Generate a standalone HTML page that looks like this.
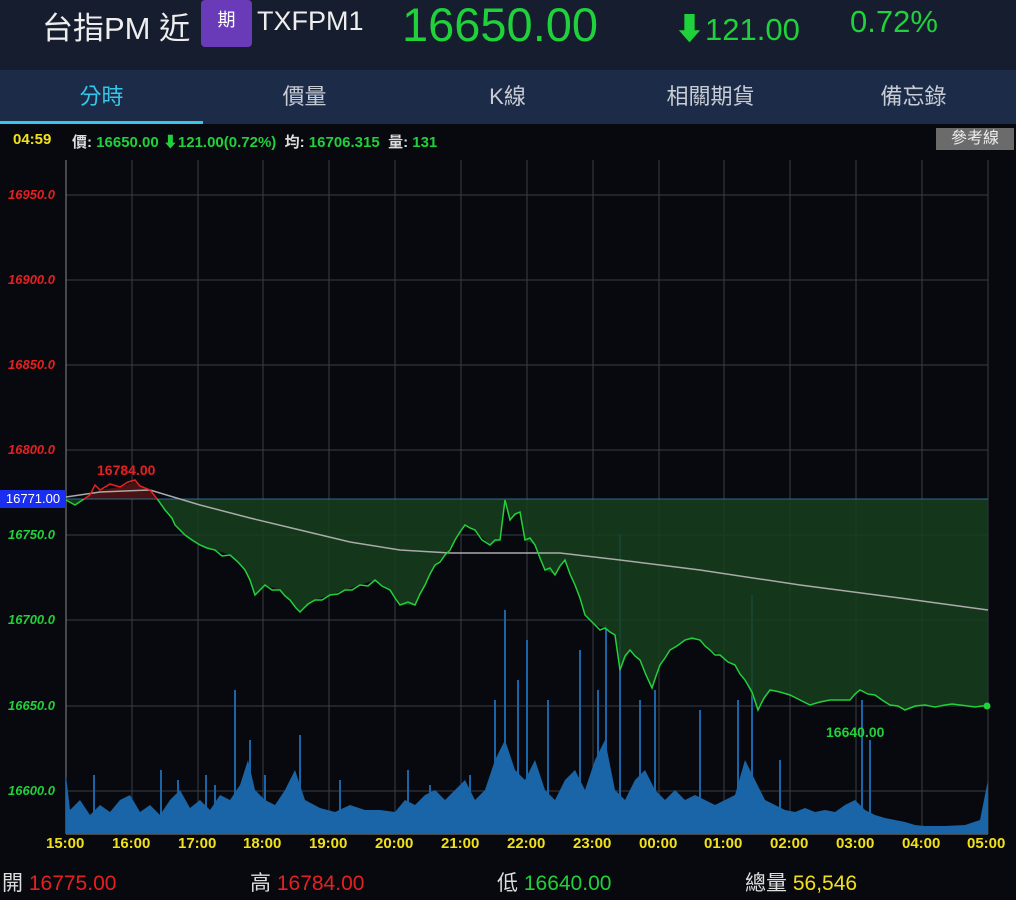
<!DOCTYPE html>
<html><head><meta charset="utf-8"><style>
*{margin:0;padding:0;box-sizing:border-box}
body{width:1016px;height:900px;background:#08090e;font-family:"Liberation Sans","Noto Sans CJK TC",sans-serif;position:relative;overflow:hidden;color:#fff}
.hdr{position:absolute;left:0;top:0;width:1016px;height:70px;background:#161d2e}
.t{position:absolute;white-space:nowrap}
.tabs{position:absolute;left:0;top:70px;width:1016px;height:54px;background:#1c2b47}
.tab{position:absolute;top:0;height:54px;line-height:54px;text-align:center;font-size:22px;color:#c8ccd4;width:203px}
.info{position:absolute;top:131px;font-size:15px;font-weight:bold}
.yl{position:absolute;left:8px;font-size:13px;font-weight:bold;font-style:italic}
.xl{position:absolute;top:835px;font-size:15px;font-weight:bold;color:#f2e11a}
.bt{position:absolute;top:867px;font-size:21px}
</style></head><body>
<div class="hdr">
<div class="t" style="left:42px;top:3px;font-size:31px;color:#eee">台指PM 近</div>
<div class="t" style="left:201px;top:0;width:51px;height:47px;background:#6a3bb8;border-radius:4px;font-size:18px;text-align:center;line-height:40px">期</div>
<div class="t" style="left:257px;top:6px;font-size:27px;color:#eee">TXFPM1</div>
<div class="t" style="left:402px;top:-3px;font-size:47px;color:#1fd13a">16650.00</div>
<div class="t" style="left:674px;top:4px;font-size:31px;color:#1fd13a">⬇121.00</div>
<div class="t" style="left:850px;top:4px;font-size:31px;color:#1fd13a">0.72%</div>
</div>
<div class="tabs">
<div class="tab" style="left:0;color:#35c6ea">分時</div>
<div class="tab" style="left:203px">價量</div>
<div class="tab" style="left:406px">K線</div>
<div class="tab" style="left:609px">相關期貨</div>
<div class="tab" style="left:812px">備忘錄</div>
<div style="position:absolute;left:0;top:51px;width:203px;height:3px;background:#35c6ea"></div>
</div>
<div class="info" style="left:13px;color:#f2e11a">04:59</div>
<div class="info" style="left:72px;color:#1fd13a"><span style="color:#ddd">價:</span> 16650.00 ⬇121.00(0.72%) &nbsp;<span style="color:#ddd">均:</span> 16706.315 &nbsp;<span style="color:#ddd">量:</span> 131</div>
<div class="t" style="left:936px;top:128px;width:78px;height:22px;background:#6b6b6b;color:#eee;font-size:16px;text-align:center;line-height:22px">參考線</div>
<svg style="position:absolute;left:0;top:0" width="1016" height="900">
<defs>
<clipPath id="below"><rect x="0" y="499" width="1016" height="400"/></clipPath>
<clipPath id="above"><rect x="0" y="0" width="1016" height="499"/></clipPath>
</defs>
<g stroke="#3a3d45" stroke-width="1">
<line x1="66" y1="195" x2="988" y2="195"/><line x1="66" y1="280" x2="988" y2="280"/><line x1="66" y1="365" x2="988" y2="365"/><line x1="66" y1="450" x2="988" y2="450"/><line x1="66" y1="535" x2="988" y2="535"/><line x1="66" y1="620" x2="988" y2="620"/><line x1="66" y1="706" x2="988" y2="706"/><line x1="66" y1="791" x2="988" y2="791"/>
<line x1="132" y1="160" x2="132" y2="834"/><line x1="198" y1="160" x2="198" y2="834"/><line x1="263" y1="160" x2="263" y2="834"/><line x1="329" y1="160" x2="329" y2="834"/><line x1="395" y1="160" x2="395" y2="834"/><line x1="461" y1="160" x2="461" y2="834"/><line x1="527" y1="160" x2="527" y2="834"/><line x1="593" y1="160" x2="593" y2="834"/><line x1="659" y1="160" x2="659" y2="834"/><line x1="724" y1="160" x2="724" y2="834"/><line x1="790" y1="160" x2="790" y2="834"/><line x1="856" y1="160" x2="856" y2="834"/><line x1="922" y1="160" x2="922" y2="834"/><line x1="988" y1="160" x2="988" y2="834"/>
</g>
<line x1="66" y1="160" x2="66" y2="834" stroke="#888"/>
<line x1="66" y1="834" x2="988" y2="834" stroke="#888"/>
<polygon fill="#1a64a8" points="66,834 66,775 70,810 80,800 90,815 100,805 110,812 120,800 130,795 140,812 150,805 160,815 170,800 180,790 190,808 200,800 210,810 220,795 230,800 240,785 248,760 255,790 265,800 275,805 285,790 295,770 305,800 320,808 335,812 350,805 365,810 380,810 395,812 405,800 415,805 425,795 435,790 445,800 455,790 465,780 475,800 485,790 495,760 505,740 515,770 525,780 535,760 545,790 555,800 565,780 575,770 585,790 595,760 605,740 615,790 625,800 635,780 645,770 655,790 665,800 675,790 685,800 695,795 705,800 715,805 725,800 735,795 745,760 755,780 765,800 775,805 785,810 795,812 805,808 815,812 825,810 835,812 845,805 855,800 865,810 875,815 885,818 895,820 905,822 915,825 925,826 945,826 965,825 980,820 988,780 988,834"/>
<g stroke="#1a64a8" stroke-width="2">
<line x1="94" y1="834" x2="94" y2="775"/><line x1="161" y1="834" x2="161" y2="770"/><line x1="178" y1="834" x2="178" y2="780"/><line x1="206" y1="834" x2="206" y2="775"/><line x1="215" y1="834" x2="215" y2="785"/><line x1="300" y1="834" x2="300" y2="735"/><line x1="235" y1="834" x2="235" y2="690"/><line x1="250" y1="834" x2="250" y2="740"/><line x1="265" y1="834" x2="265" y2="775"/><line x1="340" y1="834" x2="340" y2="780"/><line x1="408" y1="834" x2="408" y2="770"/><line x1="430" y1="834" x2="430" y2="785"/><line x1="470" y1="834" x2="470" y2="775"/><line x1="495" y1="834" x2="495" y2="700"/><line x1="505" y1="834" x2="505" y2="610"/><line x1="518" y1="834" x2="518" y2="680"/><line x1="527" y1="834" x2="527" y2="640"/><line x1="548" y1="834" x2="548" y2="700"/><line x1="580" y1="834" x2="580" y2="650"/><line x1="598" y1="834" x2="598" y2="690"/><line x1="606" y1="834" x2="606" y2="625"/><line x1="620" y1="834" x2="620" y2="535"/><line x1="640" y1="834" x2="640" y2="700"/><line x1="655" y1="834" x2="655" y2="690"/><line x1="700" y1="834" x2="700" y2="710"/><line x1="738" y1="834" x2="738" y2="700"/><line x1="752" y1="834" x2="752" y2="595"/><line x1="780" y1="834" x2="780" y2="760"/><line x1="862" y1="834" x2="862" y2="700"/><line x1="870" y1="834" x2="870" y2="740"/>
</g>
<polygon fill="#163e1c" fill-opacity="0.85" clip-path="url(#below)" points="66,499 66,500 75,505 90,495 100,490 120,487 135,482 150,490 158,500 165,510 175,525 185,535 200,545 215,550 230,555 245,570 255,595 265,585 280,590 290,600 300,612 315,600 330,595 345,590 360,585 375,580 390,590 400,605 415,605 425,585 435,565 445,555 455,540 465,525 475,530 490,545 500,540 505,500 510,520 520,512 525,540 535,545 545,570 555,575 565,560 575,585 585,615 595,625 605,628 615,635 620,670 630,650 640,660 652,688 660,665 670,650 685,640 700,640 710,650 720,655 735,665 745,680 758,710 770,690 790,695 810,705 830,700 850,700 860,690 875,695 890,705 905,710 925,705 945,705 960,705 975,707 988,706 988,499"/>
<polygon fill="#4a1212" clip-path="url(#above)" points="66,499 75,505 90,495 100,490 120,487 135,482 150,490 158,500 66,499"/>
<line x1="0" y1="499" x2="988" y2="499" stroke="#2a6a8a" stroke-width="1"/>
<polyline fill="none" stroke="#aaa" stroke-width="1.5" points="66,497 100,492 150,490 200,505 250,518 300,530 350,542 400,550 450,553 500,553 560,553 620,560 700,570 800,585 900,598 988,610"/>
<polyline fill="none" stroke="#22d03a" stroke-width="1.5" clip-path="url(#below)" points="66,500 75,505 90,495 100,490 120,487 135,482 150,490 158,500 165,510 172,518 175,525 180,530 185,535 192,540 200,545 207,548 215,550 222,556 230,555 238,562 245,570 250,580 255,595 260,590 265,585 272,590 280,590 285,596 290,600 296,608 300,612 308,604 315,600 322,600 330,595 338,594 345,590 352,590 360,585 368,586 375,580 382,586 390,590 395,598 400,605 408,602 415,605 420,594 425,585 430,574 435,565 440,562 445,555 450,550 455,540 460,532 465,525 470,528 475,530 482,540 490,545 495,540 500,540 505,500 510,520 515,514 520,512 525,540 530,538 535,545 540,558 545,570 550,568 555,575 560,566 565,560 570,574 575,585 580,598 585,615 590,620 595,625 600,630 605,628 610,632 615,635 620,670 625,656 630,650 635,656 640,660 646,675 652,688 656,676 660,665 665,658 670,650 677,646 685,640 692,638 700,640 705,646 710,650 715,655 720,655 728,662 735,665 740,674 745,680 752,692 758,710 764,698 770,690 780,692 790,695 800,700 810,705 820,702 830,700 840,700 850,700 855,694 860,690 868,694 875,695 882,700 890,705 898,706 905,710 915,706 925,705 935,707 945,705 952,704 960,705 968,706 975,707 982,706 988,706"/>
<polyline fill="none" stroke="#e52020" stroke-width="1.5" clip-path="url(#above)" points="66,500 75,505 90,495 95,485 100,490 110,484 120,487 128,482 135,480 140,486 150,490 158,500"/>
<circle cx="987" cy="706" r="3.5" fill="#22d03a"/>
<text x="97" y="475" fill="#e52020" font-size="14" font-weight="bold" font-family="Liberation Sans">16784.00</text>
<text x="826" y="737" fill="#22d03a" font-size="14" font-weight="bold" font-family="Liberation Sans">16640.00</text>
</svg>
<div class="yl" style="top:187px;color:#e52020">16950.0</div>
<div class="yl" style="top:272px;color:#e52020">16900.0</div>
<div class="yl" style="top:357px;color:#e52020">16850.0</div>
<div class="yl" style="top:442px;color:#e52020">16800.0</div>
<div class="t" style="left:0;top:490px;width:66px;height:18px;background:#1a2ef0;color:#fff;font-size:13px;line-height:18px;text-align:center">16771.00</div>
<div class="yl" style="top:527px;color:#22d03a">16750.0</div>
<div class="yl" style="top:612px;color:#22d03a">16700.0</div>
<div class="yl" style="top:698px;color:#22d03a">16650.0</div>
<div class="yl" style="top:783px;color:#22d03a">16600.0</div>
<div class="xl" style="left:46px">15:00</div><div class="xl" style="left:112px">16:00</div><div class="xl" style="left:178px">17:00</div><div class="xl" style="left:243px">18:00</div><div class="xl" style="left:309px">19:00</div><div class="xl" style="left:375px">20:00</div><div class="xl" style="left:441px">21:00</div><div class="xl" style="left:507px">22:00</div><div class="xl" style="left:573px">23:00</div><div class="xl" style="left:639px">00:00</div><div class="xl" style="left:704px">01:00</div><div class="xl" style="left:770px">02:00</div><div class="xl" style="left:836px">03:00</div><div class="xl" style="left:902px">04:00</div><div class="xl" style="left:967px">05:00</div>
<div class="bt" style="left:2px;color:#ddd">開 <span style="color:#e52020">16775.00</span></div>
<div class="bt" style="left:250px;color:#ddd">高 <span style="color:#e52020">16784.00</span></div>
<div class="bt" style="left:497px;color:#ddd">低 <span style="color:#22d03a">16640.00</span></div>
<div class="bt" style="left:745px;color:#ddd">總量 <span style="color:#f2e11a">56,546</span></div>
</body></html>
